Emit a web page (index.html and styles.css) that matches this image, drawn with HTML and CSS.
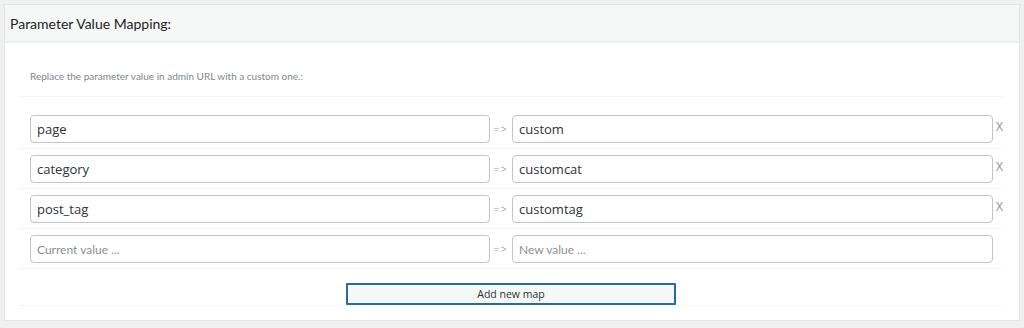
FILE: index.html
```html
<!DOCTYPE html>
<html lang="en">
<head>
  <meta charset="UTF-8" />
  <title>Parameter Value Mapping</title>
  <link rel="stylesheet" href="styles.css">
</head>
<body>

<div class="panel">
  <div class="panel-head">Parameter Value Mapping:</div>
  <div class="panel-body">
    <div class="desc">Replace the parameter value in admin URL with a custom one.:</div>

    <div class="maps">
      <div class="map-row">
        <input type="text" class="field" value="page" />
        <span class="arrow">=&gt;</span>
        <input type="text" class="field" value="custom" />
        <span class="remove">X</span>
      </div>
      <div class="map-row">
        <input type="text" class="field" value="category" />
        <span class="arrow">=&gt;</span>
        <input type="text" class="field" value="customcat" />
        <span class="remove">X</span>
      </div>
      <div class="map-row">
        <input type="text" class="field" value="post_tag" />
        <span class="arrow">=&gt;</span>
        <input type="text" class="field" value="customtag" />
        <span class="remove">X</span>
      </div>
      <div class="map-row">
        <input type="text" class="field" placeholder="Current value ..." />
        <span class="arrow">=&gt;</span>
        <input type="text" class="field" placeholder="New value ..." />
        <span class="remove"></span>
      </div>
    </div>

    <div class="add-row">
      <button type="button" class="add-btn">Add new map</button>
    </div>
  </div>
</div>

</body>
</html>
```

FILE: styles.css
```css
/* Reset */
* {
  margin: 0; padding: 0; box-sizing: border-box;
}

body {
  background: #f0f0f1;
  color: #2c3338;
  font-family: 'Open Sans', 'Noto Sans', Arial, sans-serif;
  padding: 4px 4px 0 4px;
}

.panel {
  width: 1016px;
  background: #fff;
  border: 1px solid #e3e5e8;
}

.panel-head {
  height: 38px;
  line-height: 37px;
  padding: 0 5px;
  font-family: Lato, 'Open Sans', sans-serif;
  font-size: 14px;
  color: #1d2327;
  background: #f6f7f7;
  border-bottom: 2px solid #eef0f2;
}

.panel-body {
  padding: 14px 15px 14px 13px;
}

.desc {
  padding: 12px 12px;
  font-family: Lato, 'Open Sans', sans-serif;
  font-size: 10px;
  line-height: 15px;
  color: #80868b;
  border-bottom: 1px solid #f4f5f6;
}

.maps {
  margin-top: 12px;
}

.map-row {
  display: flex;
  align-items: center;
  padding: 6px 0 5px 12px;
  border-bottom: 1px solid #f6f7f7;
}

.field {
  height: 28px;
  padding: 0 6px;
  font-family: inherit;
  font-size: 13px;
  color: #2c3338;
  border: 1px solid #c3c4c7;
  border-radius: 4px;
  outline: none;
  background: #fff;
}

.map-row .field:first-child {
  width: 460px;
}

.map-row .field:nth-child(3) {
  flex: 1;
}

.field::placeholder {
  font-family: Lato, 'Open Sans', sans-serif;
  font-size: 12px;
  color: #8c8f94;
}

.arrow {
  width: 22px;
  text-align: center;
  font-size: 10px;
  letter-spacing: 1.5px;
  color: #a0a5aa;
}

.remove {
  width: 11px;
  padding-left: 3px;
  align-self: flex-start;
  margin-top: 3px;
  font-size: 12px;
  color: #8c8f94;
}

.add-row {
  display: flex;
  justify-content: center;
  padding-top: 14px;
  border-bottom: 1px solid #f6f7f7;
}

.add-btn {
  width: 330px;
  height: 22px;
  font-family: inherit;
  font-size: 10.5px;
  color: #2c3338;
  background: #f6f7f7;
  border: 2px solid #2c6a9c;
  border-radius: 1px;
  cursor: pointer;
}
```
